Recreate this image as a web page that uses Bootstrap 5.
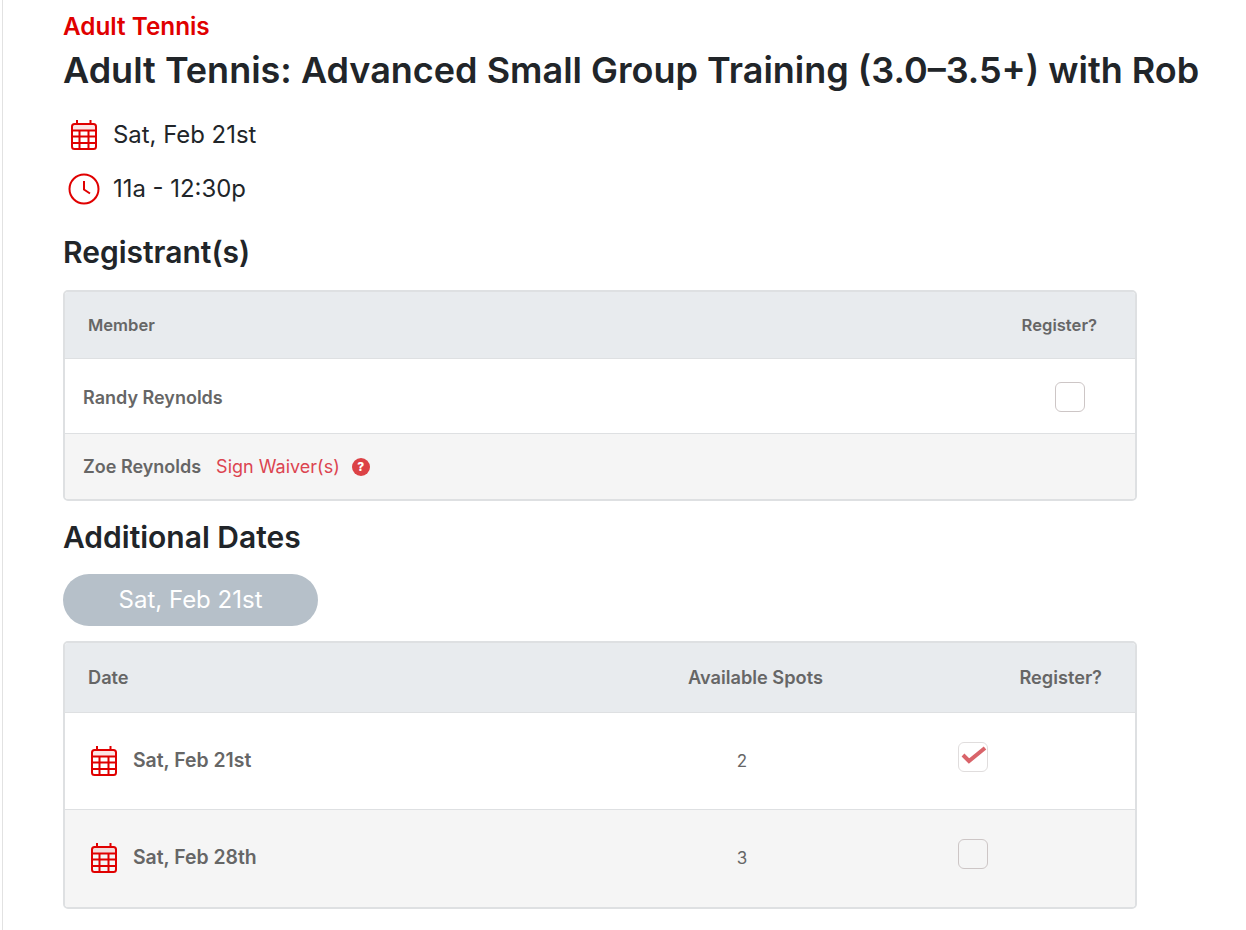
<!DOCTYPE html>
<html lang="en">
<head>
    <meta charset="UTF-8">
    <meta name="viewport" content="width=device-width, initial-scale=1.0">
    <title>Adult Tennis</title>
    <link href="https://cdn.jsdelivr.net/npm/bootstrap@5.3.0/dist/css/bootstrap.min.css" rel="stylesheet">
    <style>
        body {
            font-family: Inter, "Liberation Sans", sans-serif;
            color: #212529;
            background: #fff;
        }
        .page-wrap {
            margin-left: 2px;
            border-left: 1px solid #e2e2e2;
            padding: 12px 0 0 60px;
            min-height: 930px;
        }
        .eyebrow {
            font-size: 24.3px;
            line-height: 28px;
            font-weight: 600;
            color: #e00000;
        }
        .event-title {
            font-size: 36px;
            line-height: 44px;
            font-weight: 600;
            margin: 8px 0 0;
            white-space: nowrap;
        }
        .meta-row {
            font-size: 23.9px;
            line-height: 32px;
            height: 32px;
            gap: 8px;
        }
        .meta-first { margin-top: 27px; }
        .meta-second { margin-top: 22px; }
        .icon-slot { width: 42px; }
        .section-title {
            font-size: 30px;
            line-height: 34px;
            font-weight: 600;
            margin: 19px 0 20px;
        }
        .section-first { margin: 30px 0 21px; }
        .reg-box {
            width: 1074px;
            border: 2px solid #dee0e2;
            border-radius: 5px;
            overflow: hidden;
            color: #666;
            font-weight: 600;
            font-size: 18px;
        }
        .reg-head {
            background: #e8ebee;
            border-bottom: 1px solid #dee0e2;
        }
        .reg-line { border-bottom: 1px solid #dee0e2; }
        .reg-line:last-child { border-bottom: 0; }
        .reg-alt { background: #f5f5f5; }
        .check-box {
            width: 30px;
            height: 30px;
            border: 1px solid #cdc6c6;
            border-radius: 6px;
            background: #fff;
        }
        .check-on { border-color: #e0dddd; }
        .check-alt { background: #f5f5f5; }
        .waiver-link {
            color: #dc4450;
            font-weight: 400;
            text-decoration: none;
        }
        .help-dot {
            width: 18px;
            height: 18px;
            border-radius: 50%;
            background: #dc4246;
            color: #fff;
            font-size: 12px;
            font-weight: 800;
            margin-left: 12px;
        }
        .date-pill {
            width: 255px;
            height: 52px;
            border-radius: 26px;
            border: 0;
            font-size: 24px;
            display: block;
        }
        .date-pill:disabled { background: #b6c0c9; color: #fff; opacity: 1; }
        .pill-gap { margin-top: 15px; }
        .head-one { height: 67px; padding-left: 23px; padding-right: 38px; font-size: 16.6px; }
        .row-one { height: 75px; padding: 2px 50px 0 18px; }
        .row-two { height: 65px; padding-left: 18px; }
        .waiver-gap { margin-left: 15px; }
        .head-two { height: 70px; padding-left: 23px; padding-right: 33px; font-size: 18.2px; }
        .date-row { height: 97px; padding-left: 26px; }
        .date-row.reg-alt { padding-bottom: 1px; }
        .head-date { width: 600px; }
        .col-date { width: 581px; font-size: 19.4px; }
        .col-spots { width: 140px; padding-top: 2px; font-size: 17px; font-weight: 400; }
        .col-check { margin-left: 146px; margin-bottom: 8px; }
    </style>
</head>
<body>
<svg width="0" height="0" class="position-absolute">
    <symbol id="cal" viewBox="0 0 26 30">
        <path d="M1 10.5h24V6.5a2.5 2.5 0 0 0-2.5-2.5h-19A2.5 2.5 0 0 0 1 6.5z" fill="#e00000" fill-opacity=".1"/>
        <g fill="none" stroke="#e00000" stroke-width="2">
            <rect x="1" y="4" width="24" height="25" rx="2.5"/>
            <path d="M6 0v4M19.500 0v4M1 10.500h24M1 16.500h24M1 23h24M8.500 10.500V29M17.500 10.500V29"/>
        </g>
    </symbol>
</svg>
<div class="page-wrap">
    <div class="eyebrow">Adult Tennis</div>
    <h1 class="event-title">Adult Tennis: Advanced Small Group Training (3.0–3.5+) with Rob</h1>

    <div class="meta-row meta-first d-flex align-items-center">
        <span class="icon-slot d-flex justify-content-center">
            <svg width="26" height="30"><use href="#cal"/></svg>
        </span>
        <span>Sat, Feb 21st</span>
    </div>
    <div class="meta-row meta-second d-flex align-items-center">
        <span class="icon-slot d-flex justify-content-center">
            <svg width="32" height="32" viewBox="0 0 32 32" fill="none" stroke="#e00000" stroke-width="2"><circle cx="16" cy="16" r="14.500"/><path d="M16 8v8.500l6 4"/></svg>
        </span>
        <span>11a - 12:30p</span>
    </div>

    <h2 class="section-title section-first">Registrant(s)</h2>
    <div class="reg-box">
        <div class="reg-head head-one d-flex align-items-center justify-content-between">
            <span>Member</span><span>Register?</span>
        </div>
        <div class="reg-line row-one d-flex align-items-center justify-content-between">
            <span>Randy Reynolds</span>
            <span class="check-box"></span>
        </div>
        <div class="reg-line reg-alt row-two d-flex align-items-center">
            <span>Zoe Reynolds</span>
            <a href="#" class="waiver-link waiver-gap">Sign Waiver(s)</a>
            <span class="help-dot d-flex align-items-center justify-content-center">?</span>
        </div>
    </div>

    <h2 class="section-title">Additional Dates</h2>
    <button class="btn date-pill" disabled>Sat, Feb 21st</button>
    <div class="reg-box pill-gap">
        <div class="reg-head head-two d-flex align-items-center">
            <span class="head-date">Date</span>
            <span>Available Spots</span>
            <span class="ms-auto">Register?</span>
        </div>
        <div class="reg-line date-row d-flex align-items-center">
            <span class="col-date d-flex align-items-center gap-3">
                <svg width="26" height="30"><use href="#cal"/></svg>
                <span>Sat, Feb 21st</span>
            </span>
            <span class="col-spots text-center">2</span>
            <span class="check-box check-on col-check d-flex align-items-center justify-content-center">
                <svg width="28" height="28" viewBox="1 1 28 28" fill="none" stroke="#d9646a" stroke-width="4"><path d="M5 13l6 6L27 6"/></svg>
            </span>
        </div>
        <div class="reg-line reg-alt date-row d-flex align-items-center">
            <span class="col-date d-flex align-items-center gap-3">
                <svg width="26" height="30"><use href="#cal"/></svg>
                <span>Sat, Feb 28th</span>
            </span>
            <span class="col-spots text-center">3</span>
            <span class="check-box check-alt col-check"></span>
        </div>
    </div>
</div>
<script src="https://cdn.jsdelivr.net/npm/bootstrap@5.3.0/dist/js/bootstrap.bundle.min.js"></script>
</body>
</html>
